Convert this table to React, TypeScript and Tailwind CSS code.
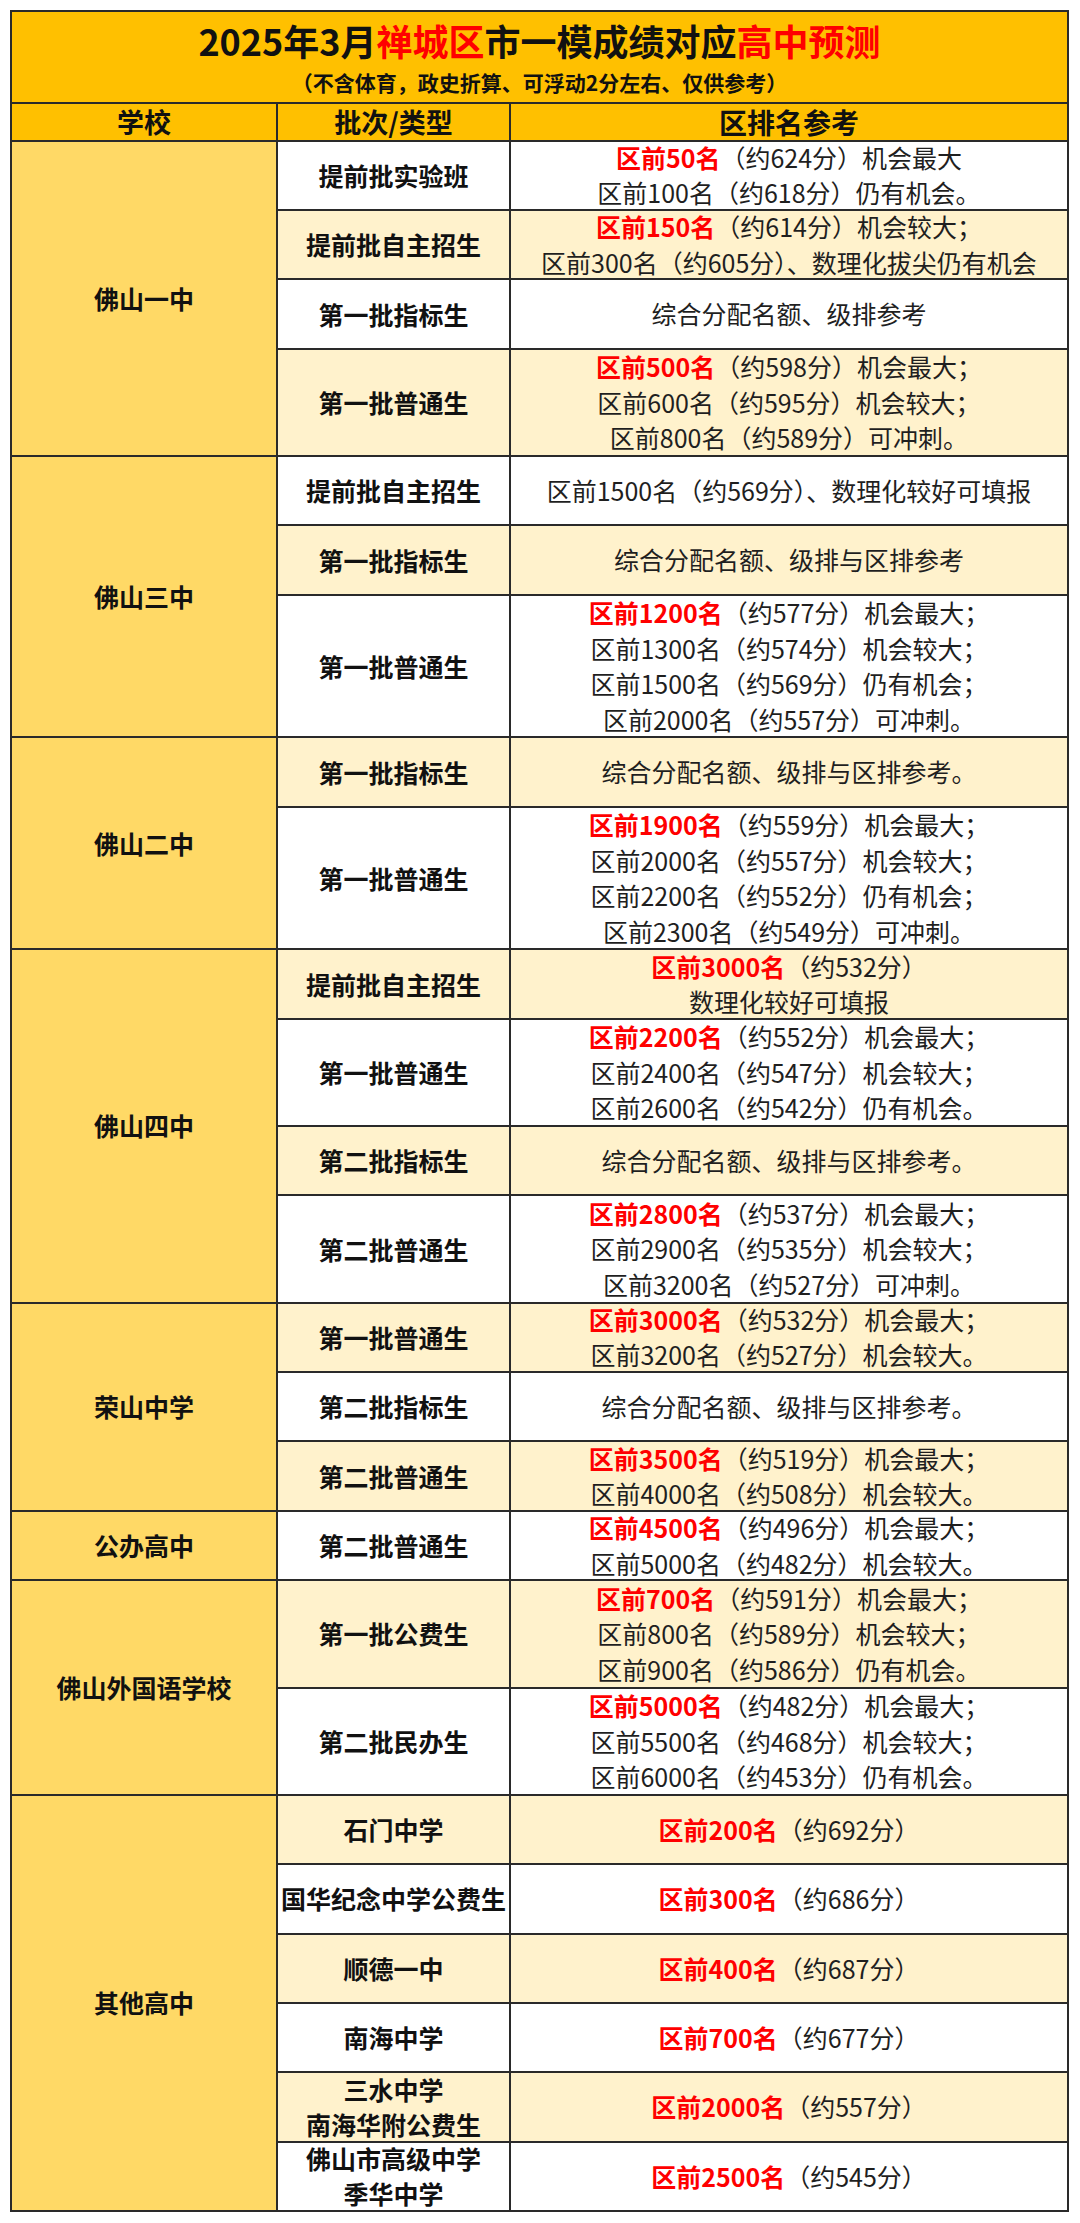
type Line = { red?: string; text?: string }
type Row = { batch: string[]; lines: Line[]; size: 2 | 3 | 4; alt: boolean }
type Group = { school: string; rows: Row[] }

const heights = {
  2: 'h-[69.35px]',
  3: 'h-[107.4px]',
  4: 'h-[142.6px]',
}

const groups: Group[] = [
  {
    school: '佛山一中',
    rows: [
      { batch: ['提前批实验班'], size: 2, alt: false, lines: [{ red: '区前50名', text: '（约624分）机会最大' }, { text: '区前100名（约618分）仍有机会。' }] },
      { batch: ['提前批自主招生'], size: 2, alt: true, lines: [{ red: '区前150名', text: '（约614分）机会较大；' }, { text: '区前300名（约605分）、数理化拔尖仍有机会' }] },
      { batch: ['第一批指标生'], size: 2, alt: false, lines: [{ text: '综合分配名额、级排参考' }] },
      { batch: ['第一批普通生'], size: 3, alt: true, lines: [{ red: '区前500名', text: '（约598分）机会最大；' }, { text: '区前600名（约595分）机会较大；' }, { text: '区前800名（约589分）可冲刺。' }] },
    ],
  },
  {
    school: '佛山三中',
    rows: [
      { batch: ['提前批自主招生'], size: 2, alt: false, lines: [{ text: '区前1500名（约569分）、数理化较好可填报' }] },
      { batch: ['第一批指标生'], size: 2, alt: true, lines: [{ text: '综合分配名额、级排与区排参考' }] },
      { batch: ['第一批普通生'], size: 4, alt: false, lines: [{ red: '区前1200名', text: '（约577分）机会最大；' }, { text: '区前1300名（约574分）机会较大；' }, { text: '区前1500名（约569分）仍有机会；' }, { text: '区前2000名（约557分）可冲刺。' }] },
    ],
  },
  {
    school: '佛山二中',
    rows: [
      { batch: ['第一批指标生'], size: 2, alt: true, lines: [{ text: '综合分配名额、级排与区排参考。' }] },
      { batch: ['第一批普通生'], size: 4, alt: false, lines: [{ red: '区前1900名', text: '（约559分）机会最大；' }, { text: '区前2000名（约557分）机会较大；' }, { text: '区前2200名（约552分）仍有机会；' }, { text: '区前2300名（约549分）可冲刺。' }] },
    ],
  },
  {
    school: '佛山四中',
    rows: [
      { batch: ['提前批自主招生'], size: 2, alt: true, lines: [{ red: '区前3000名', text: '（约532分）' }, { text: '数理化较好可填报' }] },
      { batch: ['第一批普通生'], size: 3, alt: false, lines: [{ red: '区前2200名', text: '（约552分）机会最大；' }, { text: '区前2400名（约547分）机会较大；' }, { text: '区前2600名（约542分）仍有机会。' }] },
      { batch: ['第二批指标生'], size: 2, alt: true, lines: [{ text: '综合分配名额、级排与区排参考。' }] },
      { batch: ['第二批普通生'], size: 3, alt: false, lines: [{ red: '区前2800名', text: '（约537分）机会最大；' }, { text: '区前2900名（约535分）机会较大；' }, { text: '区前3200名（约527分）可冲刺。' }] },
    ],
  },
  {
    school: '荣山中学',
    rows: [
      { batch: ['第一批普通生'], size: 2, alt: true, lines: [{ red: '区前3000名', text: '（约532分）机会最大；' }, { text: '区前3200名（约527分）机会较大。' }] },
      { batch: ['第二批指标生'], size: 2, alt: false, lines: [{ text: '综合分配名额、级排与区排参考。' }] },
      { batch: ['第二批普通生'], size: 2, alt: true, lines: [{ red: '区前3500名', text: '（约519分）机会最大；' }, { text: '区前4000名（约508分）机会较大。' }] },
    ],
  },
  {
    school: '公办高中',
    rows: [
      { batch: ['第二批普通生'], size: 2, alt: false, lines: [{ red: '区前4500名', text: '（约496分）机会最大；' }, { text: '区前5000名（约482分）机会较大。' }] },
    ],
  },
  {
    school: '佛山外国语学校',
    rows: [
      { batch: ['第一批公费生'], size: 3, alt: true, lines: [{ red: '区前700名', text: '（约591分）机会最大；' }, { text: '区前800名（约589分）机会较大；' }, { text: '区前900名（约586分）仍有机会。' }] },
      { batch: ['第二批民办生'], size: 3, alt: false, lines: [{ red: '区前5000名', text: '（约482分）机会最大；' }, { text: '区前5500名（约468分）机会较大；' }, { text: '区前6000名（约453分）仍有机会。' }] },
    ],
  },
  {
    school: '其他高中',
    rows: [
      { batch: ['石门中学'], size: 2, alt: true, lines: [{ red: '区前200名', text: '（约692分）' }] },
      { batch: ['国华纪念中学公费生'], size: 2, alt: false, lines: [{ red: '区前300名', text: '（约686分）' }] },
      { batch: ['顺德一中'], size: 2, alt: true, lines: [{ red: '区前400名', text: '（约687分）' }] },
      { batch: ['南海中学'], size: 2, alt: false, lines: [{ red: '区前700名', text: '（约677分）' }] },
      { batch: ['三水中学', '南海华附公费生'], size: 2, alt: true, lines: [{ red: '区前2000名', text: '（约557分）' }] },
      { batch: ['佛山市高级中学', '季华中学'], size: 2, alt: false, lines: [{ red: '区前2500名', text: '（约545分）' }] },
    ],
  },
]

function TableRow({ row }: { row: Row }) {
  const bg = row.alt ? 'bg-[#fff2cc]' : 'bg-white'
  return (
    <div className={`flex border-b-2 border-[#2a2a2a] ${heights[row.size]} ${bg}`}>
      <div className="w-[233px] shrink-0 border-r-2 border-[#2a2a2a] flex flex-col items-center justify-center text-[25px] font-bold leading-[35px] text-[#111]">
        {row.batch.map((b) => (
          <div key={b}>{b}</div>
        ))}
      </div>
      <div className="flex-1 flex flex-col items-center justify-center text-[25px] leading-[35.5px] text-[#1f1f1f] whitespace-nowrap">
        {row.lines.map((l, i) => (
          <div key={i}>
            {l.red && <span className="font-bold text-[#ff0000]">{l.red}</span>}
            {l.text}
          </div>
        ))}
      </div>
    </div>
  )
}

export default function App() {
  return (
    <div className="min-h-[2223px] bg-white pt-[10px] pl-[10px] font-['Noto_Sans_CJK_SC',sans-serif]">
      <div className="w-[1059px] border-l-2 border-r-2 border-t-2 border-[#2a2a2a]">
        <div className="h-[92px] bg-[#ffc000] border-b-2 border-[#2a2a2a] flex flex-col items-center pt-[7px]">
          <h1 className="text-[36px] leading-[43px] font-bold text-[#111]">
            2025年3月<span className="text-[#ff0000]">禅城区</span>市一模成绩对应<span className="text-[#ff0000]">高中预测</span>
          </h1>
          <p className="mt-[6px] text-[21px] leading-[28px] font-bold text-[#111]">（不含体育，政史折算、可浮动2分左右、仅供参考）</p>
        </div>

        <div className="flex h-[37.7px] bg-[#ffc000] border-b-2 border-[#2a2a2a] text-[27px] font-bold text-[#111]">
          <div className="w-[266px] shrink-0 border-r-2 border-[#2a2a2a] flex items-center justify-center">学校</div>
          <div className="w-[233px] shrink-0 border-r-2 border-[#2a2a2a] flex items-center justify-center">批次/类型</div>
          <div className="flex-1 flex items-center justify-center text-[28px]">区排名参考</div>
        </div>

        {groups.map((g) => (
          <div key={g.school} className="flex">
            <div className="w-[266px] shrink-0 bg-[#ffd966] border-r-2 border-b-2 border-[#2a2a2a] flex items-center justify-center text-[25px] font-bold text-[#111]">
              {g.school}
            </div>
            <div className="flex-1 flex flex-col">
              {g.rows.map((r, i) => (
                <TableRow key={i} row={r} />
              ))}
            </div>
          </div>
        ))}
      </div>
    </div>
  )
}
